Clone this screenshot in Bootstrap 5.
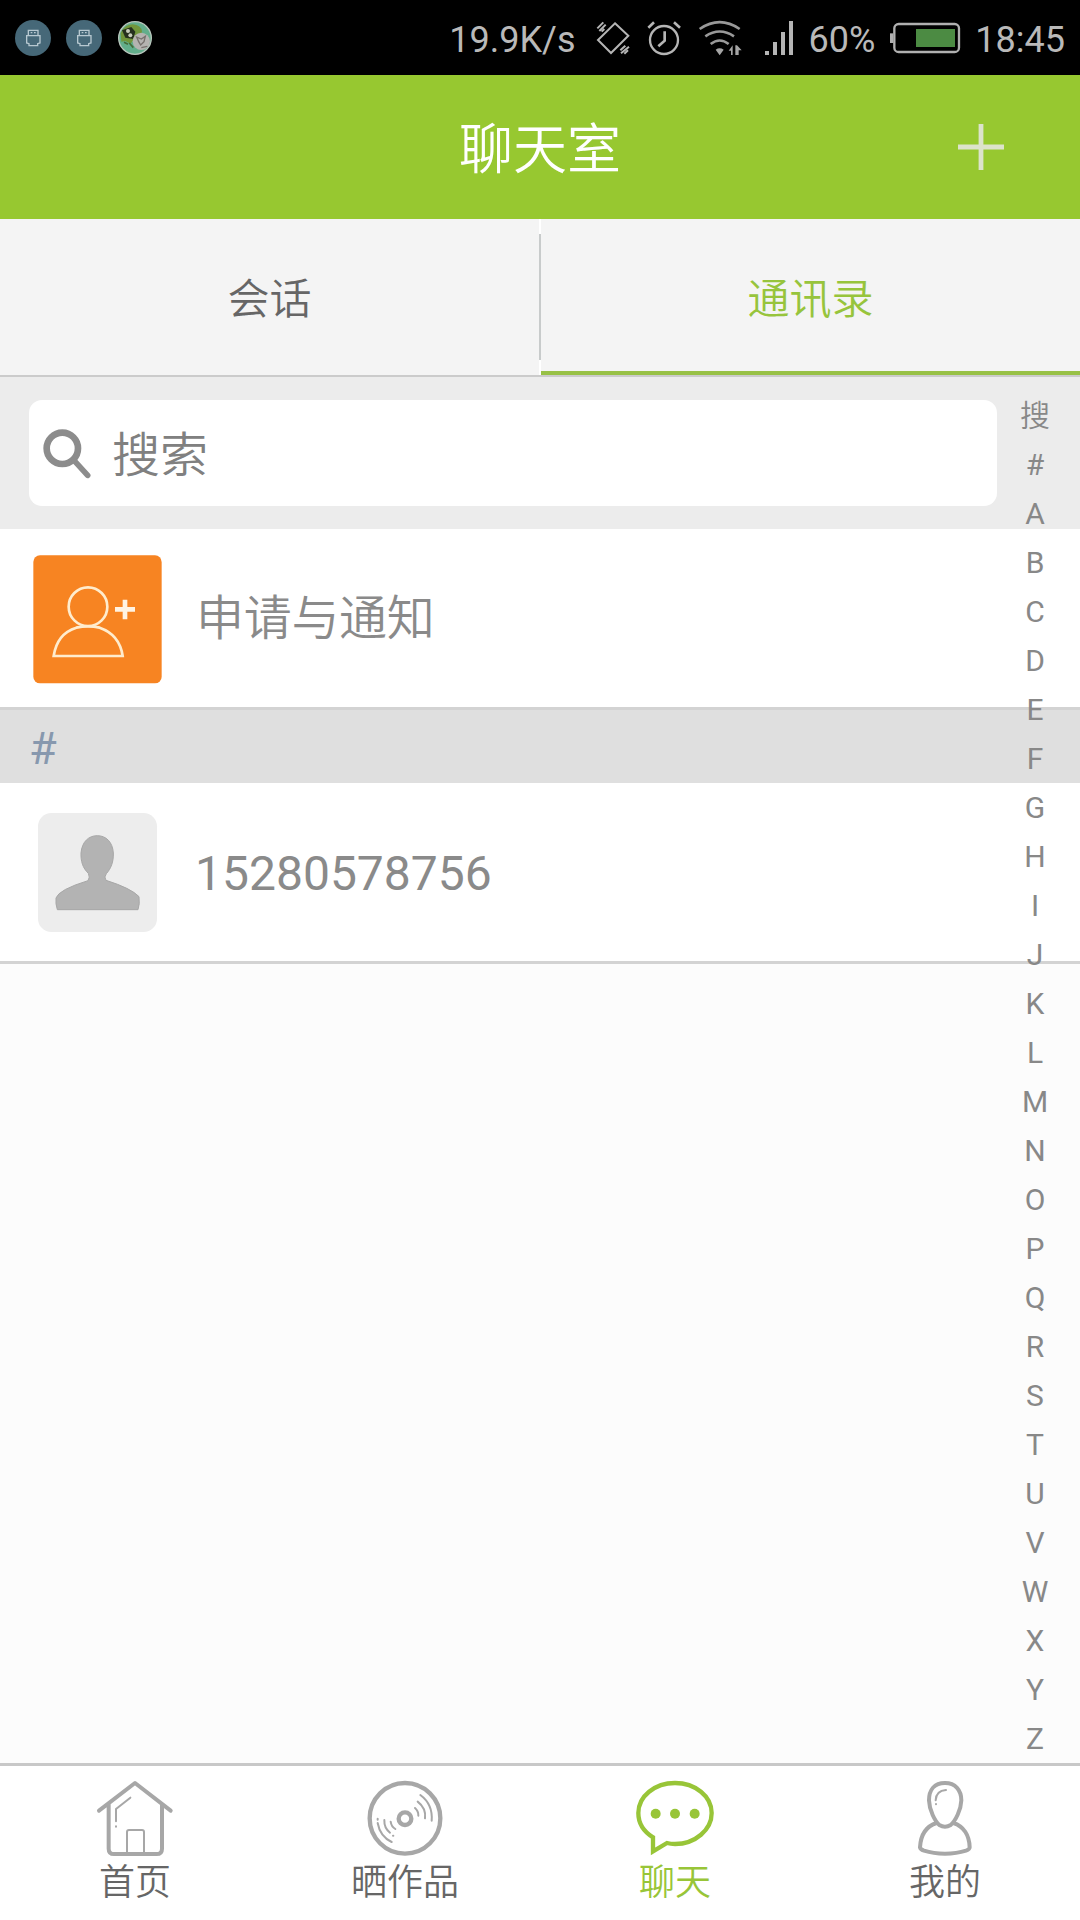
<!DOCTYPE html>
<html lang="zh-CN">
<head>
<meta charset="utf-8">
<meta name="viewport" content="width=device-width, initial-scale=1">
<title>聊天室</title>
<link href="https://cdn.jsdelivr.net/npm/bootstrap@5.3.0/dist/css/bootstrap.min.css" rel="stylesheet">
<style>
  body { width: 1080px; height: 1920px; overflow: hidden; background: #fcfcfc; color: #888; font-family: Roboto, "Noto Sans CJK SC", sans-serif; }
  svg { display: block; flex: none; overflow: visible; }
  .thin { font-weight: 350; }
  .status { height: 75px; background: #000; color: #b9b9b9; font-size: 36px; line-height: 74px; padding: 0 15px; }
  .status span { padding-top: 4px; }
  .status-icons { margin: 0 16px 0 19px; }
  .status-end { gap: 15px; }
  .title-bar { height: 144px; background: #97c830; color: #fff; }
  .title-bar h1 { font-size: 54px; line-height: 151px; font-weight: 350; }
  .title-side { width: 198px; }
  .tabs { height: 158px; background: #f4f4f4; border-bottom: 2px solid #cbcbcb; font-size: 42px; line-height: 161px; }
  .tab-item { color: #666; }
  .tab-item.current { color: #97c43c; box-shadow: inset 0 -4px #98c146; }
  .split { width: 2px; background: linear-gradient(#fff 15px, #c8cbcb 15px 141px, #fff 141px); }
  .search-zone { height: 152px; background: #ececec; padding: 23px 83px 23px 29px; }
  .search-box { height: 106px; border-radius: 13px; background: #fff; font-size: 48px; line-height: 102px; color: #808080; padding-left: 13px; gap: 20px; }
  .search-box span { padding-top: 5px; }
  .search-box svg { margin-top: 2px; }
  .entry { height: 181px; background: #fff; border-bottom: 3px solid #d3d3d3; font-size: 48px; color: #8a8a8a; }
  .entry span { padding-top: 3px; }
  .entry-apply { padding-left: 33px; gap: 34px; }
  .entry-apply span { padding-top: 1px; letter-spacing: -.3px; }
  .entry-friend { padding-left: 38px; gap: 38px; }
  .group-head { height: 73px; background: #dfdfdf; color: #8798ae; font-size: 45px; line-height: 78px; padding-left: 29px; }
  .letters { top: 391px; right: 15px; width: 60px; font-size: 30px; line-height: 49px; color: #888; }
  .bottom-nav { height: 157px; background: #fff; border-top: 3px solid #c8c8c8; font-size: 36px; color: #666; padding-top: 12px; }
  .bottom-nav span { line-height: 51px; }
  .bottom-nav .on { color: #98c538; }
</style>
</head>
<body class="d-flex flex-column position-relative">
<div class="status d-flex align-items-center justify-content-between flex-shrink-0">
  <svg width="138" height="36" viewBox="45 57 414 108" fill="none">
    <g id="usb">
      <circle cx="99" cy="111" r="54" fill="#466878"/>
      <path d="M85 102V88h29v14M80 104h40v22l-7 2v6H87v-6l-7-2z" stroke="#b7c8d0" stroke-width="4"/>
      <path d="M92 95h5M102 95h5" stroke="#b7c8d0" stroke-width="4"/>
    </g>
    <use href="#usb" x="153"/>
    <circle cx="405" cy="111" r="49" fill="#62ae8b" stroke="#b9c6bd" stroke-width="4"/>
    <path d="M362 96q10-24 36-26 26 2 28 22-2 22-26 26l-8 10-16-8-12 2z" fill="#71963b"/>
    <path d="M366 88l28-10 12 14-6 22-24-4z" fill="#26301e"/>
    <circle cx="384" cy="90" r="6" fill="#c8cdbc"/><circle cx="391" cy="103" r="6" fill="#c8cdbc"/>
    <path d="M372 124l12 6M388 126l12 14" stroke="#456c38" stroke-width="5"/>
    <circle cx="424" cy="121" r="26" fill="#b5b3b0"/>
    <path d="M410 108l14 6 12-8-4 16-10 10-6-10zM424 140l18-4" stroke="#77716d" stroke-width="4"/>
  </svg>
  <div class="d-flex align-items-center">
    <span>19.9K/s</span>
    <div class="status-icons d-flex align-items-center gap-3">
      <svg width="154" height="36" viewBox="465 57 462 108" fill="none" stroke="#b5b5b5" stroke-width="6">
        <path d="M525 67l40 37-52 52-39-39zM472 82l18-18M478 90l19-19M485 92l8-8M541 148l15-14M543 157l24-20M553 158l11-10"/>
        <circle cx="672" cy="117" r="42" stroke-width="7"/>
        <path d="M674 91v28l-19 17M625 80l17-16M702 64l18 16" stroke-width="8"/>
        <g stroke="#999" stroke-width="8"><path d="M779 84q60-41 120 0"/><path d="M796 106q43-29 86 0"/><path d="M812 129q27-21 54 0"/></g>
        <path d="M827 146q12-8 24 0l-12 17zM866 149l12-16v29h-5v-13zM886 133h5l14 15h-9v14h-10z" fill="#a5a5a5" stroke="none"/>
      </svg>
      <svg width="28" height="36" viewBox="72 57 84 108" fill="#b5b5b5"><path d="M72 150h12v12H72zM96 123h12v39H96zM120 93h12v69h-12zM144 60h12v102h-12z"/></svg>
    </div>
    <div class="status-end d-flex align-items-center">
      <span>60%</span>
      <svg width="70" height="36" viewBox="450 57 210 108"><path d="M450 97h10v29h-10z" fill="#b0b0b0"/><rect x="463" y="69" width="194" height="84" rx="13" fill="none" stroke="#b0b0b0" stroke-width="7"/><path d="M528 84h117v54H528z" fill="#4c8b43"/></svg>
      <span>18:45</span>
    </div>
  </div>
</div>

<header class="title-bar d-flex flex-shrink-0">
  <div class="title-side"></div>
  <h1 class="flex-grow-1 text-center m-0">聊天室</h1>
  <div class="title-side d-flex align-items-center justify-content-center">
    <svg width="46" height="46" viewBox="0 0 48 48" stroke="#dce3cb" stroke-width="5"><path d="M0 24h48M24 0v48"/></svg>
  </div>
</header>

<div class="tabs thin d-flex flex-shrink-0 text-center">
  <div class="tab-item flex-fill w-50">会话</div>
  <div class="split flex-shrink-0"></div>
  <div class="tab-item current flex-fill w-50">通讯录</div>
</div>

<div class="search-zone flex-shrink-0">
  <div class="search-box thin d-flex align-items-center">
    <svg width="50" height="50" viewBox="126 179 150 150" fill="none" stroke="#8c8c8c"><circle cx="187" cy="237" r="47" stroke-width="20"/><path d="M222 273l41 45" stroke-width="17" stroke-linecap="round"/></svg>
    <span>搜索</span>
  </div>
</div>

<div class="entry entry-apply thin d-flex align-items-center flex-shrink-0">
  <svg class="mt-1" width="129" height="128" viewBox="101 557 385 384" fill="none" stroke="#ffeccd" stroke-width="8">
    <rect x="101" y="555" width="385" height="384" rx="20" fill="#f78422" stroke="none"/>
    <circle cx="265" cy="709" r="58"/><path d="M162 857Q172 790 230 772Q265 764 300 772Q360 793 369 857z"/>
    <path d="M346 717h60M376 688v59" stroke="#fff3e3" stroke-width="14"/>
  </svg>
  <span>申请与通知</span>
</div>
<div class="group-head flex-shrink-0">#</div>
<div class="entry entry-friend d-flex align-items-center flex-shrink-0">
  <svg width="119" height="119" viewBox="114 368 357 357">
    <rect x="114" y="368" width="357" height="357" rx="40" fill="#ededed"/>
    <path d="M172 658Q166 640 168 623Q176 598 264 571Q271 561 265 549C248 533 242 512 243 488C246 454 266 436 292 436C318 436 338 455 340 488C341 514 333 535 319 550Q311 560 318 570Q394 594 417 619Q420 640 414 658z" fill="#b3b3b3" stroke="#a7a7a7" stroke-width="3"/>
  </svg>
  <span>15280578756</span>
</div>

<main class="flex-grow-1"></main>

<nav class="bottom-nav thin d-flex flex-shrink-0">
  <div class="w-25 d-flex flex-column align-items-center">
    <svg width="80" height="80" viewBox="105 84 240 240" fill="none" stroke="#a7a7a7" stroke-width="12" stroke-linecap="round" stroke-linejoin="round">
      <path d="M117 182L225 99l107 83M146 163v133q0 16 16 16h128q16 0 16-16V163"/><path d="M201 306v-60q0-6 6-6h39q6 0 6 6v60M211 143l-43 34v37M168 229v1" stroke-width="6"/>
    </svg><span>首页</span>
  </div>
  <div class="w-25 d-flex flex-column align-items-center">
    <svg width="80" height="80" viewBox="137 84 240 240" fill="none" stroke="#a7a7a7" stroke-linecap="round">
      <circle cx="257" cy="205" r="106" stroke-width="13"/><circle cx="257" cy="206" r="19" stroke-width="13"/>
      <path d="M287 174q11 10 10 23M295 155q26 20 22 50M303 135q38 28 34 77M214 215q2 15 14 22M195 210q-1 24 17 38M221 257h1M175 219q7 40 42 57M175 206v3" stroke-width="6"/>
    </svg><span>晒作品</span>
  </div>
  <div class="w-25 d-flex flex-column align-items-center on">
    <svg width="80" height="80" viewBox="105 84 240 240" fill="none" stroke="#98c538" stroke-width="13">
      <path d="M159 304V262C133 246 115 221 115 189C115 139 164 99 225 99S335 139 335 189S286 282 225 282Q212 282 201 279z"/><g fill="#98c538" stroke="none"><circle cx="167" cy="191" r="15"/><circle cx="225" cy="191" r="15"/><circle cx="284" cy="191" r="15"/></g>
    </svg><span>聊天</span>
  </div>
  <div class="w-25 d-flex flex-column align-items-center">
    <svg width="80" height="80" viewBox="75 174 240 240" fill="none" stroke="#a7a7a7" stroke-width="12">
      <path d="M195 189C163 189 147 210 147 241C148 271 165 304 178 315Q195 325 212 315C227 302 243 269 244 241C244 210 226 189 195 189zM170 309C138 319 122 346 120 382Q121 388 132 392Q160 401 195 401T258 392Q269 388 269 382C268 346 251 319 220 309"/><path d="M198 210q-30 2-31 31M168 252v1" stroke-width="6" stroke-linecap="round"/>
    </svg><span>我的</span>
  </div>
</nav>

<div class="letters position-absolute text-center">
  <div class="thin">搜</div><div>#</div><div>A</div><div>B</div><div>C</div><div>D</div><div>E</div><div>F</div><div>G</div><div>H</div><div>I</div><div>J</div><div>K</div><div>L</div><div>M</div><div>N</div><div>O</div><div>P</div><div>Q</div><div>R</div><div>S</div><div>T</div><div>U</div><div>V</div><div>W</div><div>X</div><div>Y</div><div>Z</div>
</div>
<script src="https://cdn.jsdelivr.net/npm/bootstrap@5.3.0/dist/js/bootstrap.bundle.min.js"></script>
</body>
</html>
